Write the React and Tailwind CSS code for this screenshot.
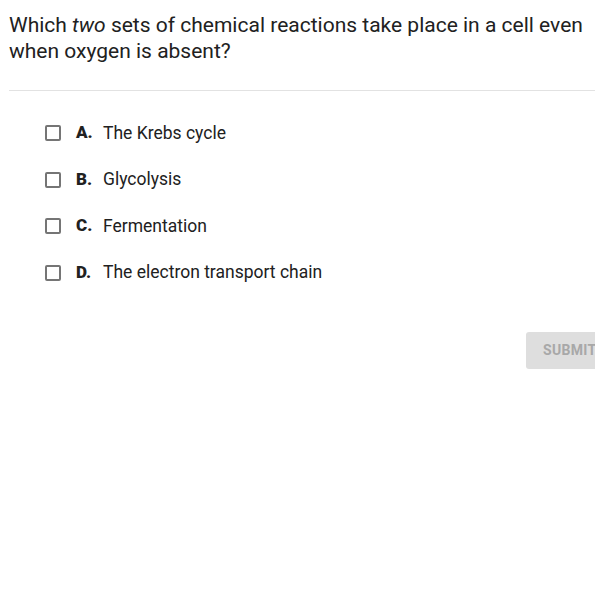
import React from "react";

const options = [
  { letter: "A.", text: "The Krebs cycle" },
  { letter: "B.", text: "Glycolysis" },
  { letter: "C.", text: "Fermentation" },
  { letter: "D.", text: "The electron transport chain" },
];

const App = () => {
  return (
    <div
      className="w-[595px] h-[594px] overflow-hidden bg-white text-[#212121]"
      style={{ fontFamily: "Roboto, 'Liberation Sans', sans-serif" }}
    >
      <div className="pl-[9px] pt-[12px]">
        <p className="text-[21px] leading-[26px] pr-2">
          Which <em>two</em> sets of chemical reactions take place in a cell even
          when oxygen is absent?
        </p>
        <div className="mt-[26px] h-px bg-[#e2e2e2]" />
      </div>

      <div className="pl-[45px] pt-[33px] flex flex-col gap-[28.5px]">
        {options.map((o) => (
          <div key={o.letter} className="flex items-center h-[18px]">
            <span className="w-[16px] h-[16px] border-2 border-[#757575] rounded-[2px]" />
            <span className="ml-[15px] w-[27px] font-black text-[17px]">{o.letter}</span>
            <span className="text-[17.5px]">{o.text}</span>
          </div>
        ))}
      </div>

      <div className="pt-[50px] pl-[526px]">
        <div className="w-[100px] h-[37px] rounded-[3px] bg-[#dedede] flex items-center pl-[17px]">
          <span className="text-[14px] font-bold text-[#a8a8a8] tracking-[0.3px] whitespace-nowrap">
            SUBMIT
          </span>
        </div>
      </div>
    </div>
  );
};

export default App;
